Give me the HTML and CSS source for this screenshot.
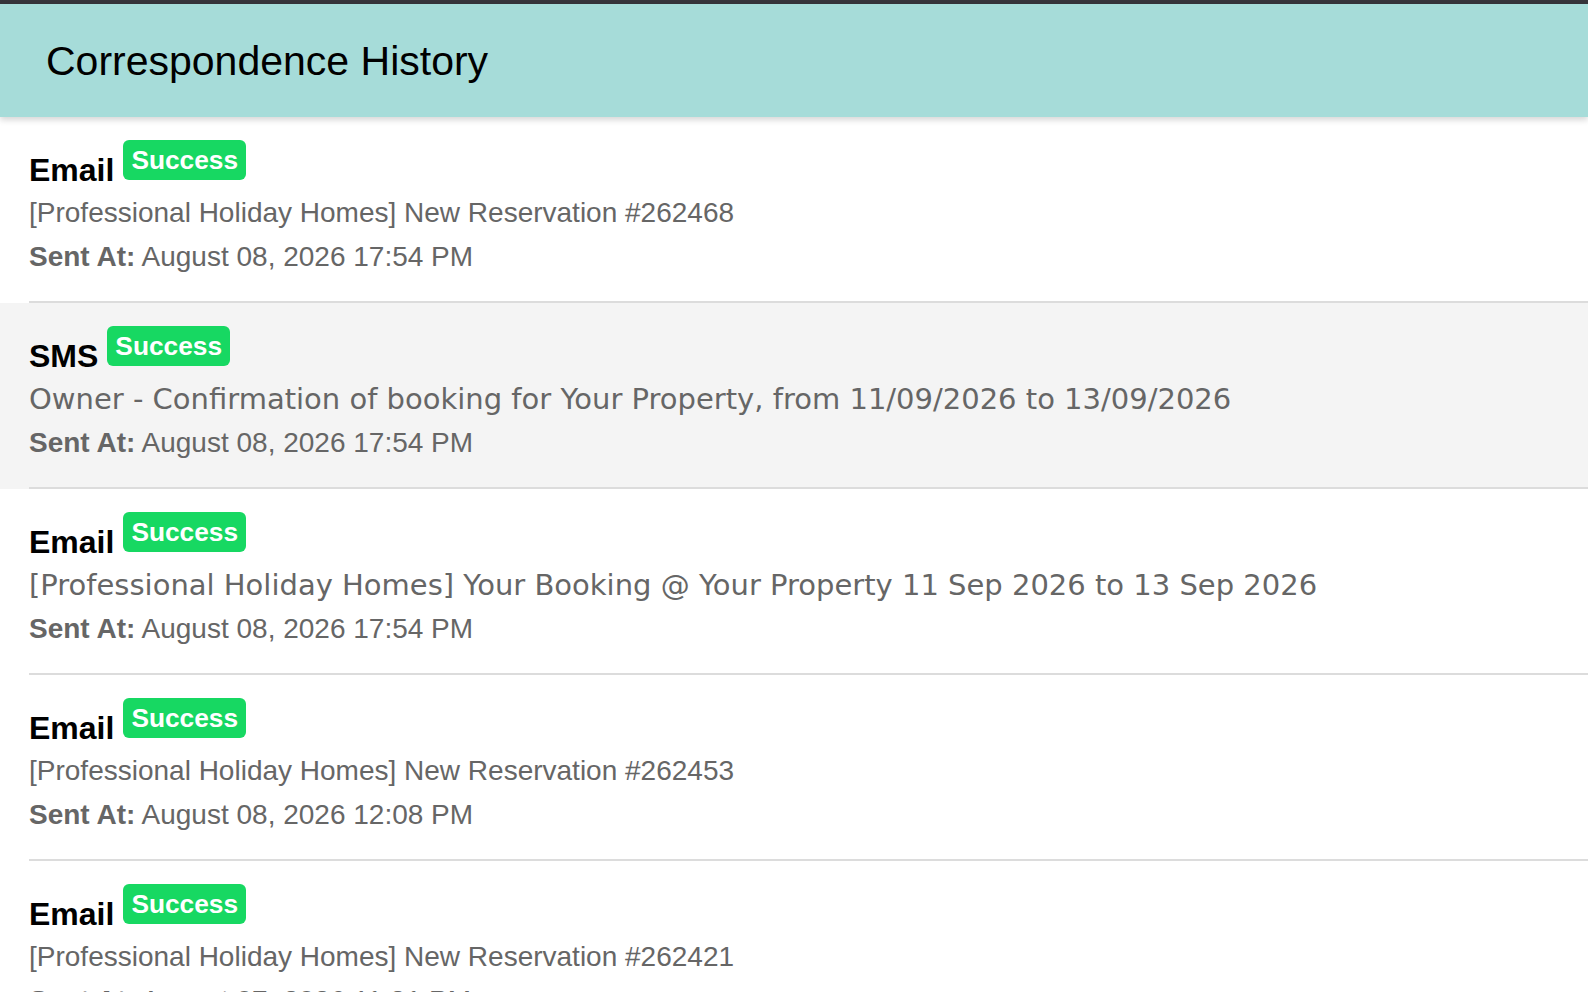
FILE: index.html
```html
<!DOCTYPE html>
<html lang="en">
<head>
<meta charset="utf-8">
<title>Correspondence History</title>
<link rel="stylesheet" href="styles.css">
</head>
<body>
<div class="page">
  <header class="page-header">
    <h1 class="page-title">Correspondence History</h1>
  </header>
  <ul class="history">
    <li class="history-item">
      <div class="history-body">
        <h4 class="history-type">Email<span class="badge">Success</span></h4>
        <p class="history-subject">[Professional Holiday Homes] New Reservation #262468</p>
        <p class="history-sent"><strong>Sent At:</strong> August 08, 2026 17:54 PM</p>
      </div>
    </li>
    <li class="history-item is-active">
      <div class="history-body">
        <h4 class="history-type">SMS<span class="badge">Success</span></h4>
        <p class="history-subject alt-font">Owner - Confirmation of booking for Your Property, from 11/09/2026 to 13/09/2026</p>
        <p class="history-sent"><strong>Sent At:</strong> August 08, 2026 17:54 PM</p>
      </div>
    </li>
    <li class="history-item">
      <div class="history-body">
        <h4 class="history-type">Email<span class="badge">Success</span></h4>
        <p class="history-subject alt-font">[Professional Holiday Homes] Your Booking @ Your Property 11 Sep 2026 to 13 Sep 2026</p>
        <p class="history-sent"><strong>Sent At:</strong> August 08, 2026 17:54 PM</p>
      </div>
    </li>
    <li class="history-item">
      <div class="history-body">
        <h4 class="history-type">Email<span class="badge">Success</span></h4>
        <p class="history-subject">[Professional Holiday Homes] New Reservation #262453</p>
        <p class="history-sent"><strong>Sent At:</strong> August 08, 2026 12:08 PM</p>
      </div>
    </li>
    <li class="history-item">
      <div class="history-body">
        <h4 class="history-type">Email<span class="badge">Success</span></h4>
        <p class="history-subject">[Professional Holiday Homes] New Reservation #262421</p>
        <p class="history-sent"><strong>Sent At:</strong> August 07, 2026 11:31 PM</p>
      </div>
    </li>
  </ul>
</div>
</body>
</html>
```

FILE: styles.css
```css
html, body {
  margin: 0;
  padding: 0;
  background: #ffffff;
}

body {
  font-family: "Liberation Sans", Arial, sans-serif;
  color: #000;
  overflow: hidden;
}

.page {
  border-top: 4px solid #36353b;
}

.page-header {
  position: relative;
  z-index: 1;
  height: 113px;
  background: #a6dcd9;
  display: flex;
  align-items: center;
  padding: 2px 0 0 46px;
  box-sizing: border-box;
  box-shadow: 0 3px 6px rgba(0, 0, 0, 0.16);
}

.page-title {
  margin: 0;
  font-size: 41px;
  font-weight: normal;
  line-height: 1.15;
  color: #000;
}

.history {
  list-style: none;
  margin: 0;
  padding: 0;
}

.history-item {
  padding-left: 29px;
}

.history-item.is-active {
  background: #f4f4f4;
}

.history-body {
  border-bottom: 2px solid #dcdcdc;
  padding: 23px 0 22px;
}

.history-type {
  margin: 0;
  font-size: 32px;
  font-weight: bold;
  line-height: 43px;
  color: #000;
}

.badge {
  display: inline-block;
  margin-left: 9px;
  padding: 7px 8px;
  font-size: 26.3px;
  line-height: 1;
  font-weight: bold;
  color: #fff;
  background: #17d862;
  border-radius: 6px;
  vertical-align: 12px;
}

.history-subject,
.history-sent {
  margin: 0;
  font-size: 28px;
  line-height: 42px;
  color: #666;
  white-space: nowrap;
}

.history-sent {
  margin-top: 1px;
  line-height: 44px;
}

.history-subject.alt-font {
  font-family: "DejaVu Sans", Verdana, sans-serif;
  font-size: 29px;
}

.history-sent strong {
  font-weight: bold;
}
```
